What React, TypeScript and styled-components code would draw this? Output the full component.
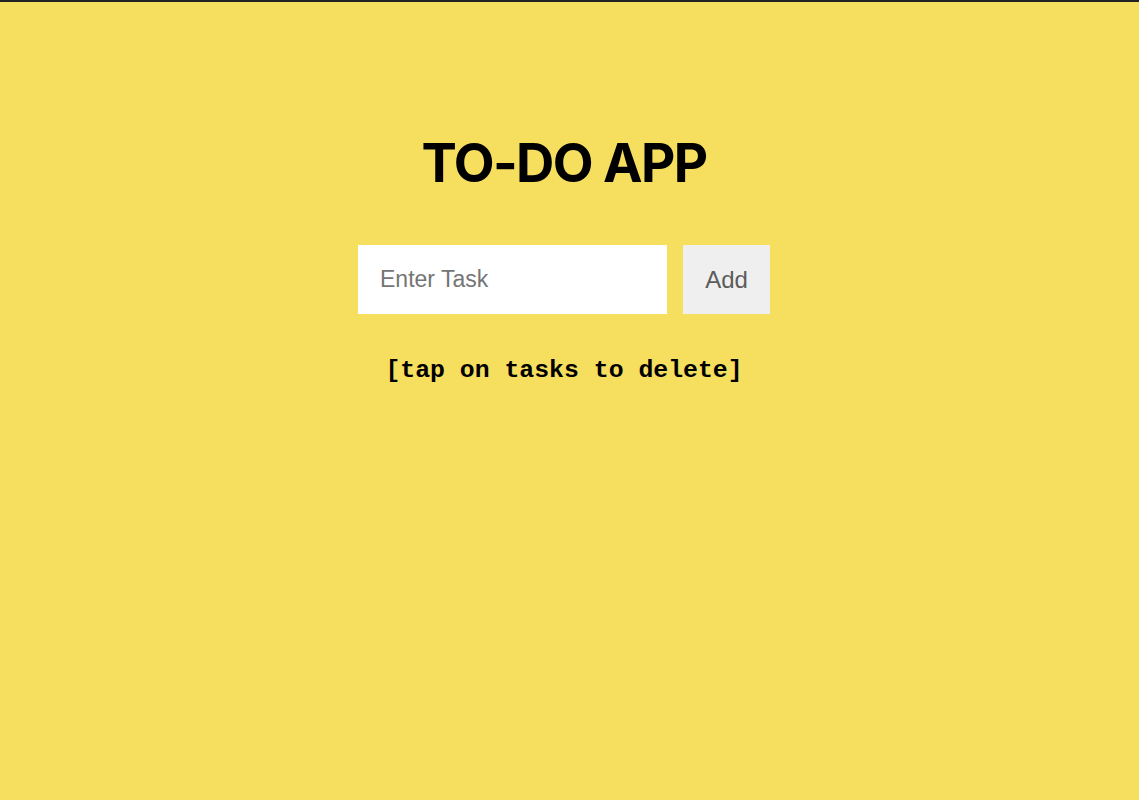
import React from "react";
import styled, { createGlobalStyle } from "styled-components";

const Global = createGlobalStyle`
  html, body { margin: 0; padding: 0; }
  body { background: #f6de5e; }
`;

const Page = styled.div`
  min-height: 800px;
  box-sizing: border-box;
  border-top: 2px solid #222;
  background: #f6de5e;
  display: flex;
  flex-direction: column;
  align-items: center;
  padding: 128px 11px 0 0;
`;

const Title = styled.h1`
  margin: 0;
  font-family: Inter, "Liberation Sans", sans-serif;
  font-weight: 700;
  font-size: 53px;
  line-height: 66px;
  color: #000;
  letter-spacing: -1.6px;
`;

const Form = styled.div`
  display: flex;
  gap: 16px;
  margin-top: 49px;
`;

const Input = styled.input`
  width: 309px;
  height: 69px;
  box-sizing: border-box;
  border: none;
  outline: none;
  padding: 0 20px 0 22px;
  font-family: "Liberation Sans", Arial, sans-serif;
  font-size: 23px;
  background: #fff;
  color: #000;
  &::placeholder { color: #757575; }
`;

const Button = styled.button`
  width: 87px;
  height: 69px;
  border: none;
  background: #efefef;
  color: #5c5c5c;
  font-family: "Liberation Sans", Arial, sans-serif;
  font-size: 24px;
  padding: 0;
`;

const Hint = styled.p`
  margin: 42px 0 0;
  font-family: "Liberation Mono", "Courier New", monospace;
  font-weight: 700;
  font-size: 24.8px;
  color: #000;
`;

export default function App() {
  return (
    <>
      <Global />
      <Page>
        <Title>TO-DO APP</Title>
        <Form>
          <Input placeholder="Enter Task" />
          <Button>Add</Button>
        </Form>
        <Hint>[tap on tasks to delete]</Hint>
      </Page>
    </>
  );
}
